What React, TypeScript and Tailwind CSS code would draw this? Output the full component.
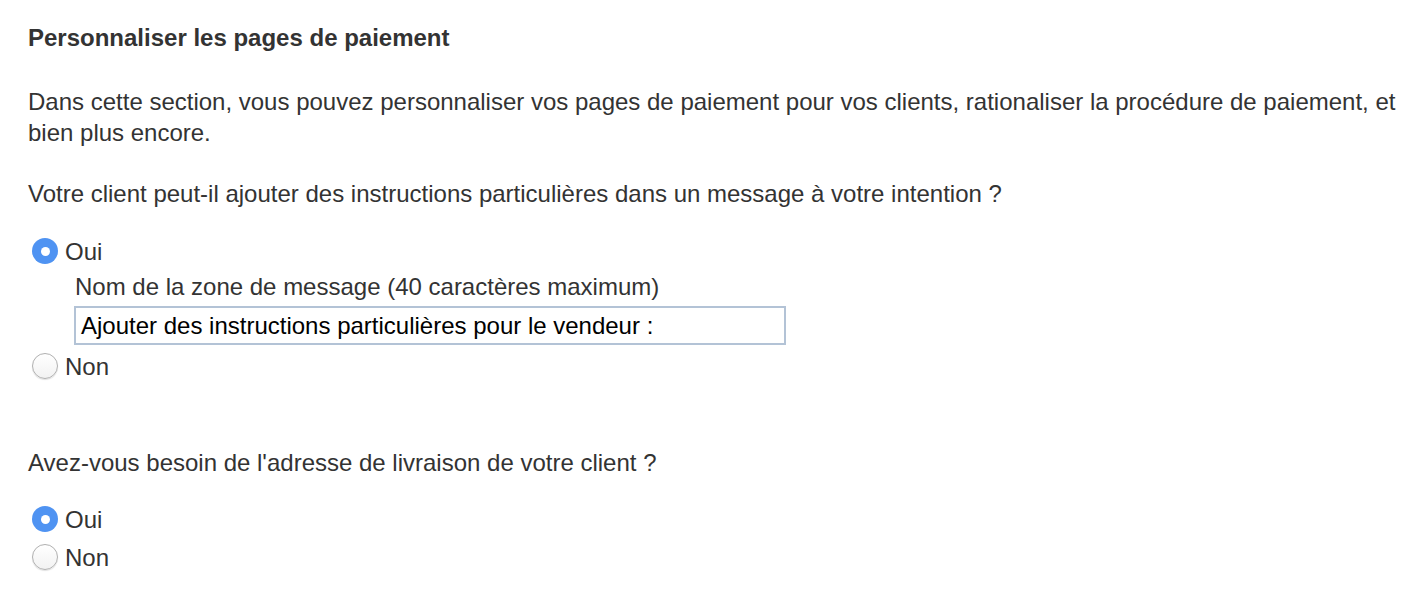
import React from 'react';

function Radio({ checked, label, className = '' }: { checked?: boolean; label: string; className?: string }) {
    return (
        <label className={`flex items-center h-[38px] ${className}`}>
            <span
                className={
                    checked
                        ? 'w-[26px] h-[26px] rounded-full bg-[#4f93f2] flex items-center justify-center ml-[32px]'
                        : 'w-[26px] h-[26px] rounded-full bg-gradient-to-b from-white to-[#f2f2f2] border border-[#b0b0b0] shadow-[0_1px_1px_rgba(0,0,0,0.12)] ml-[32px]'
                }
            >
                {checked && <span className="w-[9px] h-[9px] rounded-full bg-white" />}
            </span>
            <span className="ml-[7px]">{label}</span>
        </label>
    );
}

export default function App() {
    return (
        <div className="w-[1426px] h-[608px] bg-white text-[#333] text-[24px] leading-[31px] font-['Liberation_Sans',Arial,sans-serif] pl-[28px] pt-[22px]">
            <h2 className="font-bold text-[24px] leading-[31px]">Personnaliser les pages de paiement</h2>

            <p className="mt-[33px] pr-[20px]">
                Dans cette section, vous pouvez personnaliser vos pages de paiement pour vos clients, rationaliser la procédure de paiement, et bien plus encore.
            </p>

            <p className="mt-[30px]">Votre client peut-il ajouter des instructions particulières dans un message à votre intention ?</p>

            <div className="-ml-[28px] mt-[23px]">
                <Radio checked label="Oui" />
                <div className="ml-[75px] -mt-[2px]">
                    <div className="leading-[38px]">Nom de la zone de message (40 caractères maximum)</div>
                    <div className="w-[712px] h-[39px] border-2 border-[#b3c3d6] flex items-center px-[5px] text-black -ml-[1px]">
                        Ajouter des instructions particulières pour le vendeur :
                    </div>
                </div>
                <Radio label="Non" className="mt-[2px]" />
            </div>

            <p className="mt-[62px]">Avez-vous besoin de l'adresse de livraison de votre client ?</p>

            <div className="-ml-[28px] mt-[22px]">
                <Radio checked label="Oui" />
                <Radio label="Non" />
            </div>
        </div>
    );
}
